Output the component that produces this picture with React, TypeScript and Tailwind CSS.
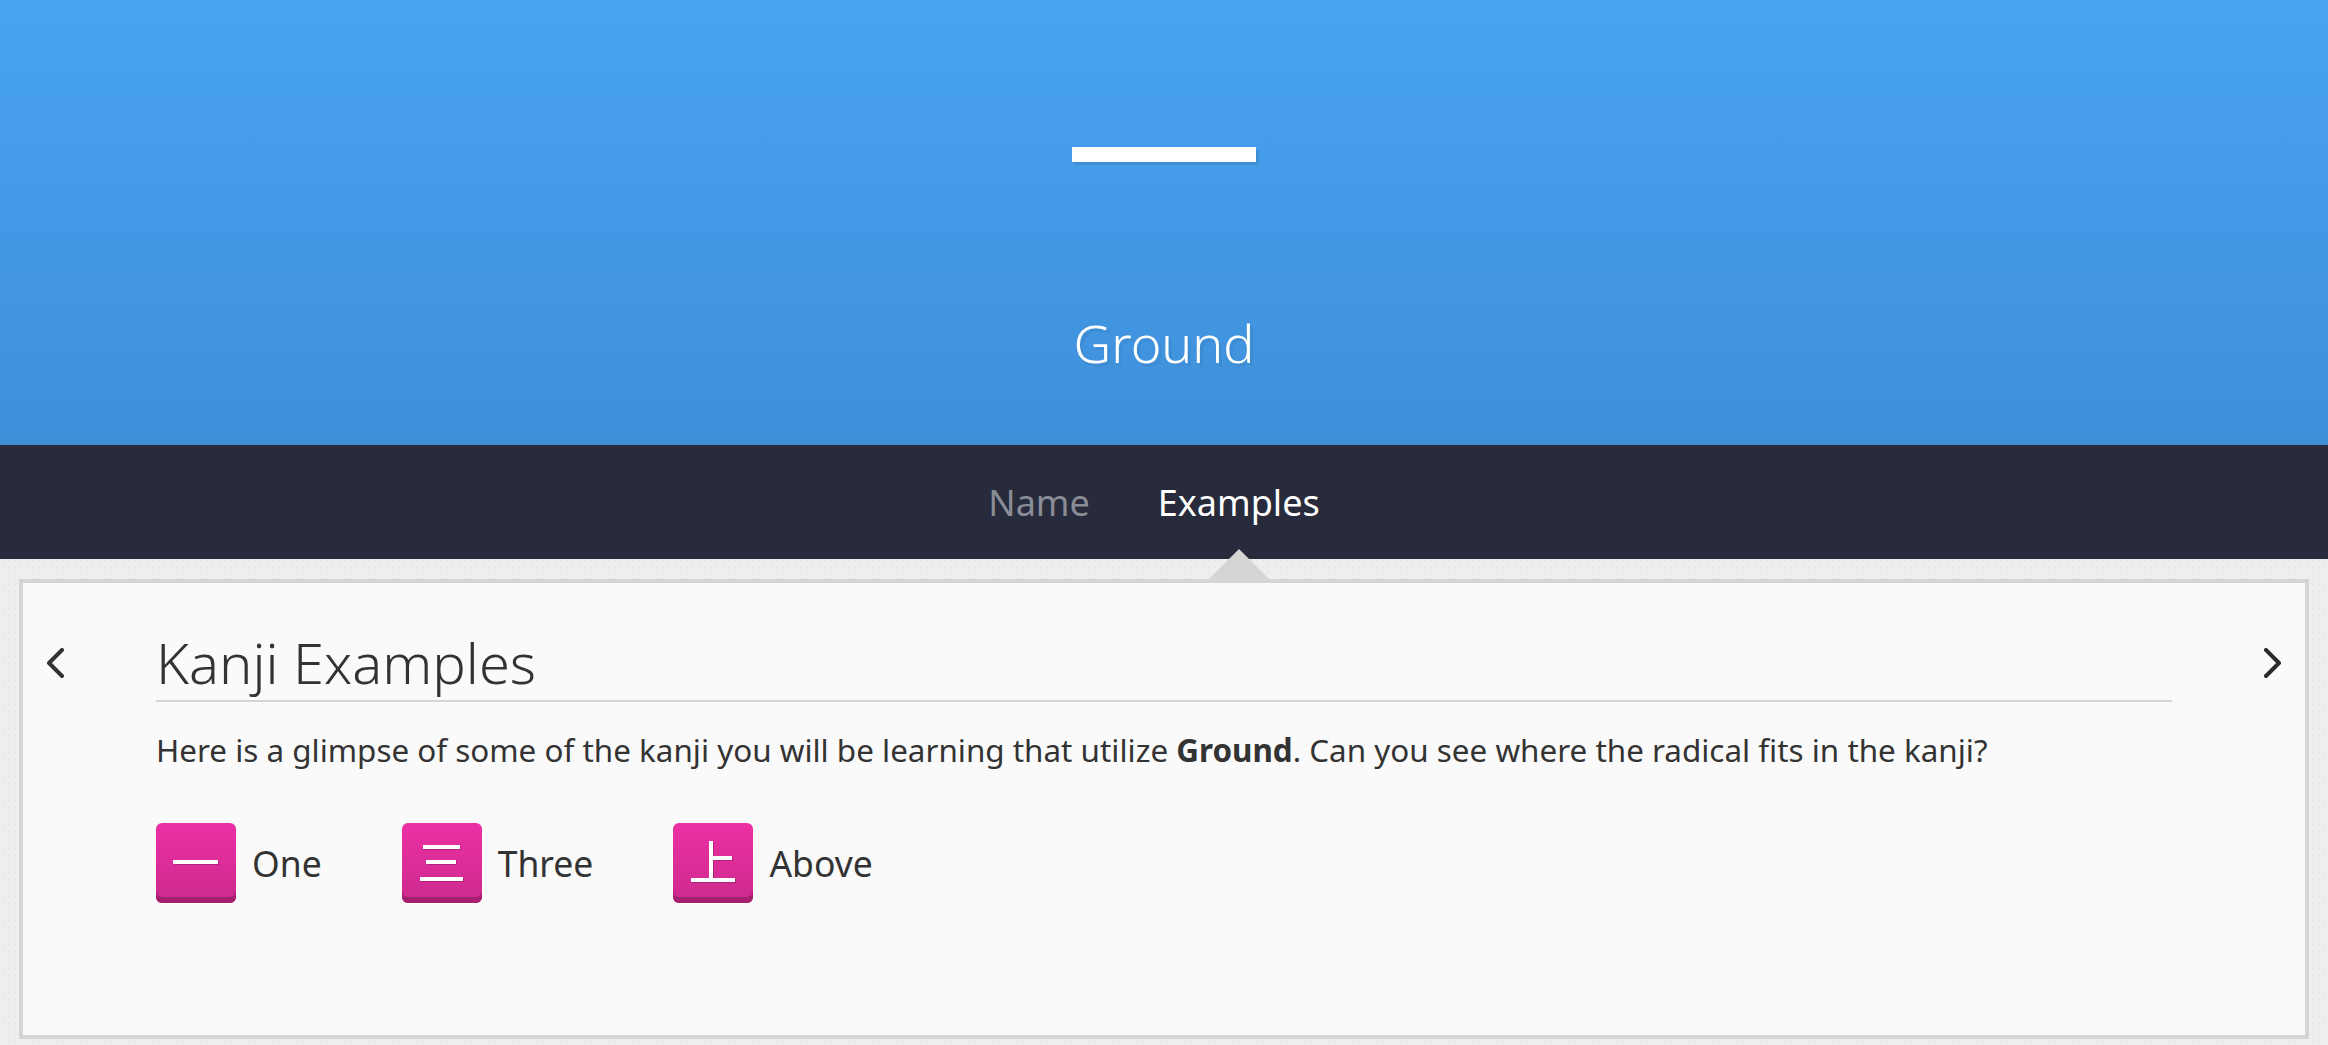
const font = { fontFamily: '"Noto Sans", sans-serif' };

function OneGlyph() {
  return (
    <svg viewBox="0 0 80 80" className="w-20 h-20">
      <rect x="17" y="37" width="45" height="4" fill="#000" opacity="0.2" transform="translate(1 1)" />
      <rect x="17" y="37" width="45" height="4" fill="#fff" />
    </svg>
  );
}

function ThreeGlyph() {
  return (
    <svg viewBox="0 0 80 80" className="w-20 h-20">
      <g fill="#000" opacity="0.2" transform="translate(1 1)">
        <rect x="21" y="22" width="37" height="4" />
        <rect x="24" y="37" width="30" height="4" />
        <rect x="18" y="54" width="43" height="4" />
      </g>
      <g fill="#fff">
        <rect x="21" y="22" width="37" height="4" />
        <rect x="24" y="37" width="30" height="4" />
        <rect x="18" y="54" width="43" height="4" />
      </g>
    </svg>
  );
}

function AboveGlyph() {
  return (
    <svg viewBox="0 0 80 80" className="w-20 h-20">
      <g fill="#000" opacity="0.2" transform="translate(1 1)">
        <rect x="36" y="18" width="4" height="39" />
        <rect x="38" y="33" width="21" height="4" />
        <rect x="18" y="55" width="44" height="4" />
      </g>
      <g fill="#fff">
        <rect x="36" y="18" width="4" height="39" />
        <rect x="38" y="33" width="21" height="4" />
        <rect x="18" y="55" width="44" height="4" />
      </g>
    </svg>
  );
}

function KanjiItem({ label, children }: { label: string; children: React.ReactNode }) {
  return (
    <div className="flex items-center gap-4 mr-20">
      <div className="w-20 h-20 rounded-[6px] bg-gradient-to-b from-[#ec30a4] to-[#cc2a8d] shadow-[inset_0_-6px_0_#a6206f]">
        {children}
      </div>
      <span className="text-[35.5px] text-[#333] leading-none pt-[2px]">{label}</span>
    </div>
  );
}

function Chevron({ d }: { d: string }) {
  return (
    <svg viewBox="0 0 20 30" className="w-5 h-[30px] shrink-0" fill="none" stroke="currentColor" strokeWidth="4" strokeLinecap="round" strokeLinejoin="round">
      <path d={d} />
    </svg>
  );
}

export default function App() {
  return (
    <div className="h-[1045px] overflow-hidden flex flex-col bg-[#eeeeee] bg-[radial-gradient(#e8e8e8_1px,transparent_1.5px)] bg-[length:6px_6px]" style={font}>
      <header className="h-[445px] flex flex-col items-center bg-gradient-to-b from-[#48a3f3] to-[#3f8fd9]">
        <div className="mt-[147px] w-[184px] h-[15px] bg-white shadow-[3px_3px_0_rgba(0,0,0,0.08)]"></div>
        <h1 className="mt-[144px] text-[52px] leading-[74px] font-light text-white [text-shadow:3px_3px_0_rgba(0,0,0,0.05)]">Ground</h1>
      </header>

      <nav className="h-[114px] bg-[#272b3b] flex justify-center items-center gap-[68px] text-[36px] pr-5 pt-[2px]">
        <span className="text-[#8a8d97]">Name</span>
        <span className="text-white">Examples</span>
      </nav>

      <main className="relative mt-5 mx-[19px] h-[460px] border-4 border-[#d5d5d5] bg-[#fafafa] flex items-start">
        <div className="absolute -top-[34px] left-[1186px] w-0 h-0 border-x-[30px] border-x-transparent border-b-[30px] border-b-[#d5d5d5]"></div>
        <div className="w-[133px] pt-[65px] pl-[23px] text-[#333]">
          <Chevron d="M16 2 L3 15 L16 28" />
        </div>
        <div className="flex-1 pt-[42px]">
          <h2 className="text-[56px] leading-[74px] font-light text-[#333] border-b-2 border-[#d5d5d5] pb-px">Kanji Examples</h2>
          <p className="mt-[26px] text-[31.4px] leading-[44px] text-[#333]">
            Here is a glimpse of some of the kanji you will be learning that utilize <strong>Ground</strong>. Can you see where the radical fits in the kanji?
          </p>
          <div className="mt-[51px] flex">
            <KanjiItem label="One"><OneGlyph /></KanjiItem>
            <KanjiItem label="Three"><ThreeGlyph /></KanjiItem>
            <KanjiItem label="Above"><AboveGlyph /></KanjiItem>
          </div>
        </div>
        <div className="w-[133px] pt-[65px] pl-[90px] text-[#2b2b2b]">
          <Chevron d="M4 2 L17 15 L4 28" />
        </div>
      </main>
    </div>
  );
}
